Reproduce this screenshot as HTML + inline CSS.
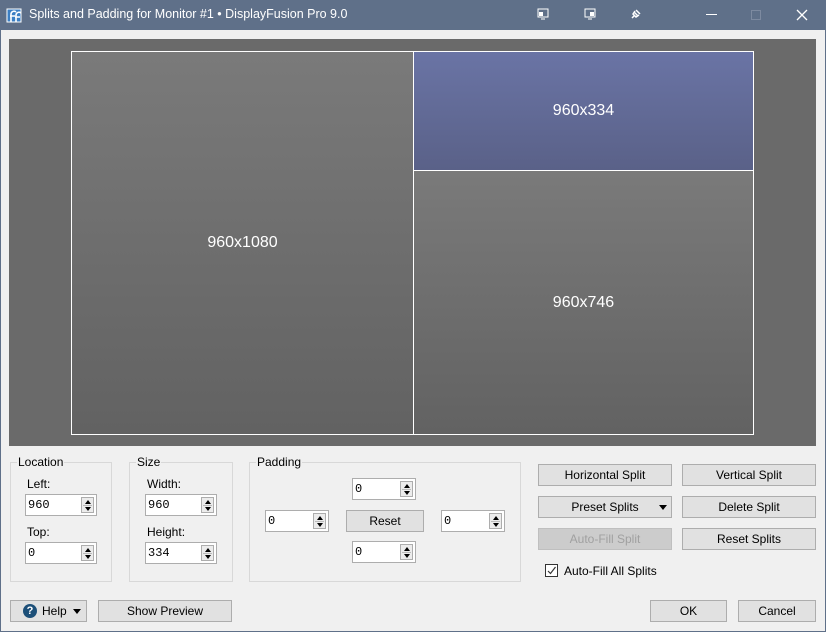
<!DOCTYPE html>
<html><head><style>
*{box-sizing:border-box;margin:0;padding:0}
body{width:826px;height:632px;background:#5f7089;font-family:"Liberation Sans",sans-serif;font-size:12px;color:#000;position:relative;overflow:hidden}
.a{position:absolute}
#win{left:1px;top:30px;width:824px;height:601px;background:#f0f0f0}
.title{left:29px;top:7px;color:#fff;font-size:12.5px}
.prev{left:9px;top:39px;width:807px;height:407px;background:#6a6a6a}
.cell{position:absolute;border:1px solid #fff;color:#fff;font-size:16px;display:flex;align-items:center;justify-content:center}
.g{background:linear-gradient(#7a7a7a,#626262)}
.grp{border:1px solid #d8d8d8;position:absolute}
.lg{position:absolute;top:-8px;left:6px;background:#f0f0f0;padding:0 1px;font-size:12px}
.lbl{position:absolute;font-size:12px}
.spin{position:absolute;height:22px;background:#fff;border:1px solid #adadad;font-family:"Liberation Mono",monospace;font-size:12px;padding:3px 2px}
.spin .ar{position:absolute;right:2px;top:2px;width:13px;height:16px;border:1px solid #adadad;background:#ececec}
.spin .ar:before{content:"";position:absolute;left:3px;top:2px;border:3px solid transparent;border-bottom:4px solid #000;border-top:0}
.spin .ar:after{content:"";position:absolute;left:3px;top:9px;border:3px solid transparent;border-top:4px solid #000;border-bottom:0}
.spin .ar i{position:absolute;left:1px;right:1px;top:7px;border-top:1px solid #bbb}
.btn{position:absolute;height:22px;background:#e1e1e1;border:1px solid #adadad;display:flex;align-items:center;justify-content:center;font-size:12px}
.dis{color:#a0a0a0;background:#cccccc;border-color:#bfbfbf}
</style></head><body>
<svg class="a" style="left:6px;top:7px" width="17" height="17" viewBox="0 0 17 17"><rect x="1" y="2" width="14" height="13" fill="#3b7fc4" stroke="#fff"/><path d="M5 15V7a3 3 0 0 1 5-2M4 9h5M10 15V8a3 3 0 0 1 5-2M9 10h5" stroke="#fff" stroke-width="1.6" fill="none"/></svg>
<div class="a title">Splits and Padding for Monitor #1 • DisplayFusion Pro 9.0</div>
<svg class="a" style="left:537px;top:8px" width="12" height="12"><rect x="1" y="1" width="10" height="8" fill="none" stroke="#fff"/><rect x="2" y="4" width="4" height="4" fill="#fff"/><path d="M4 11h4" stroke="#fff"/></svg>
<svg class="a" style="left:584px;top:8px" width="12" height="12"><rect x="1" y="1" width="10" height="8" fill="none" stroke="#fff"/><rect x="6" y="4" width="4" height="4" fill="#fff"/><path d="M4 11h4" stroke="#fff"/></svg>
<svg class="a" style="left:629px;top:8px" width="12" height="12"><path d="M3 10l3-3M5 4l4 4M7 2l4 4M6 3l-2 3 3 3 3-2" stroke="#fff" stroke-width="1.5" fill="none"/></svg>
<div class="a" style="left:706px;top:14px;width:11px;border-top:1px solid #fff"></div>
<div class="a" style="left:751px;top:10px;width:10px;height:10px;border:1px solid #7d8aa0"></div>
<svg class="a" style="left:796px;top:9px" width="12" height="12"><path d="M1 1l10 10M11 1L1 11" stroke="#fff" stroke-width="1.3"/></svg>
<div id="win" class="a"></div>
<div class="a prev">
<div class="cell g" style="left:62px;top:12px;width:343px;height:384px">960x1080</div>
<div class="cell" style="left:404px;top:12px;width:341px;height:120px;background:linear-gradient(#6a74a5,#5a6188)">960x334</div>
<div class="cell g" style="left:404px;top:131px;width:341px;height:265px">960x746</div>
</div>
<div class="grp" style="left:10px;top:462px;width:102px;height:120px"><span class="lg">Location</span></div>
<div class="lbl" style="left:27px;top:477px">Left:</div>
<div class="spin" style="left:25px;top:494px;width:72px">960<div class="ar"><i></i></div></div>
<div class="lbl" style="left:27px;top:525px">Top:</div>
<div class="spin" style="left:25px;top:542px;width:72px">0<div class="ar"><i></i></div></div>
<div class="grp" style="left:129px;top:462px;width:104px;height:120px"><span class="lg">Size</span></div>
<div class="lbl" style="left:147px;top:477px">Width:</div>
<div class="spin" style="left:145px;top:494px;width:72px">960<div class="ar"><i></i></div></div>
<div class="lbl" style="left:147px;top:525px">Height:</div>
<div class="spin" style="left:145px;top:542px;width:72px">334<div class="ar"><i></i></div></div>
<div class="grp" style="left:249px;top:462px;width:272px;height:120px"><span class="lg">Padding</span></div>
<div class="spin" style="left:352px;top:478px;width:64px">0<div class="ar"><i></i></div></div>
<div class="spin" style="left:265px;top:510px;width:64px">0<div class="ar"><i></i></div></div>
<div class="btn" style="left:346px;top:510px;width:78px">Reset</div>
<div class="spin" style="left:441px;top:510px;width:64px">0<div class="ar"><i></i></div></div>
<div class="spin" style="left:352px;top:541px;width:64px">0<div class="ar"><i></i></div></div>
<div class="btn" style="left:538px;top:464px;width:134px">Horizontal Split</div>
<div class="btn" style="left:682px;top:464px;width:134px">Vertical Split</div>
<div class="btn" style="left:538px;top:496px;width:134px">Preset Splits<span style="position:absolute;right:4px;top:8px;border:4px solid transparent;border-top:5px solid #000;border-bottom:0"></span></div>
<div class="btn" style="left:682px;top:496px;width:134px">Delete Split</div>
<div class="btn dis" style="left:538px;top:528px;width:134px">Auto-Fill Split</div>
<div class="btn" style="left:682px;top:528px;width:134px">Reset Splits</div>
<div class="a" style="left:545px;top:564px;width:13px;height:13px;border:1px solid #333;background:#fff"><svg width="11" height="11" style="position:absolute;left:0;top:0"><path d="M2 6l2.5 2.5L9.5 2" stroke="#333" fill="none" stroke-width="1.2"/></svg></div>
<div class="lbl" style="left:564px;top:564px">Auto-Fill All Splits</div>
<div class="btn" style="left:10px;top:600px;width:77px;justify-content:flex-start;padding-left:12px"><span style="display:inline-block;width:14px;height:14px;border-radius:50%;background:#1c4f78;color:#fff;font-weight:bold;font-size:11px;text-align:center;line-height:14px;margin-right:5px">?</span>Help<span style="position:absolute;right:5px;top:8px;border:4px solid transparent;border-top:5px solid #000;border-bottom:0"></span></div>
<div class="btn" style="left:98px;top:600px;width:134px">Show Preview</div>
<div class="btn" style="left:650px;top:600px;width:77px">OK</div>
<div class="btn" style="left:738px;top:600px;width:78px">Cancel</div>
</body></html>
